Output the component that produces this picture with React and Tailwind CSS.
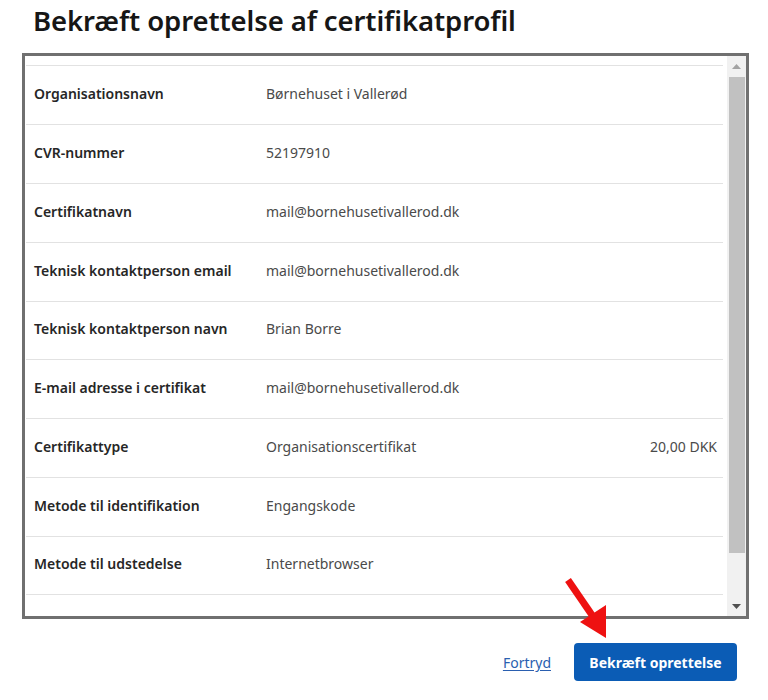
import React from "react";

const rows = [
  ["Organisationsnavn", "Børnehuset i Vallerød", "", "h-[59px]"],
  ["CVR-nummer", "52197910", "", "h-[59px]"],
  ["Certifikatnavn", "mail@bornehusetivallerod.dk", "", "h-[59px]"],
  ["Teknisk kontaktperson email", "mail@bornehusetivallerod.dk", "", "h-[59px]"],
  ["Teknisk kontaktperson navn", "Brian Borre", "", "h-[58px]"],
  ["E-mail adresse i certifikat", "mail@bornehusetivallerod.dk", "", "h-[59px]"],
  ["Certifikattype", "Organisationscertifikat", "20,00 DKK", "h-[59px]"],
  ["Metode til identifikation", "Engangskode", "", "h-[59px]"],
  ["Metode til udstedelse", "Internetbrowser", "", "h-[58px]"],
];

export default function App() {
  return (
    <div
      className="relative w-[768px] h-[700px] bg-white overflow-hidden"
      style={{ fontFamily: '"Noto Sans", "Open Sans", sans-serif' }}
    >
      <h1 className="pl-[33px] pt-[1px] h-[53px] text-[27.5px] leading-[40px] font-semibold text-[#161616] tracking-[-0.1px]">
        Bekræft oprettelse af certifikatprofil
      </h1>
      <div className="ml-[22px] w-[727px] h-[566px] border-[3px] border-[#707070] flex">
        <div className="flex-1 pr-[4px] pl-[1px] pt-[9px]">
          <div className="border-t border-[#e2e2e2]">
            {rows.map(([label, value, extra, h]) => (
              <div
                key={label}
                className={`${h} border-b border-[#e2e2e2] flex items-center pl-[8px] pr-[6px] pb-[4px] text-[14px]`}
              >
                <div className="w-[232px] font-semibold text-[#262626]">{label}</div>
                <div className="flex-1 text-[#4a4a4a]">{value}</div>
                {extra && <div className="text-[#4a4a4a]">{extra}</div>}
              </div>
            ))}
          </div>
        </div>
        <div className="w-[19px] bg-[#f1f1f1] flex flex-col items-center">
          <div className="h-[21px] flex items-center justify-center">
            <svg width="9" height="5" viewBox="0 0 9 5">
              <polygon points="0,5 9,5 4.5,0" fill="#a3a3a3" />
            </svg>
          </div>
          <div className="w-[16px] h-[476px] bg-[#c1c1c1]" />
          <div className="flex-1 flex items-end justify-center pb-[7px]">
            <svg width="9" height="5" viewBox="0 0 9 5">
              <polygon points="0,0 9,0 4.5,5" fill="#505050" />
            </svg>
          </div>
        </div>
      </div>
      <div className="flex items-center justify-end gap-[23px] pr-[31px] pt-[24px]">
        <a className="text-[14px] text-[#2a5fb0] underline underline-offset-2">Fortryd</a>
        <button className="w-[163px] h-[38px] rounded-[4px] bg-[#0b5cb5] text-white text-[14px] font-bold">
          Bekræft oprettelse
        </button>
      </div>
      <svg
        className="absolute left-[560px] top-[574px]"
        width="60"
        height="70"
        viewBox="0 0 60 70"
      >
        <line x1="8" y1="6" x2="34" y2="44" stroke="#ee1111" strokeWidth="7" strokeLinecap="butt" />
        <polygon points="20,48 46,31 46,64" fill="#ee1111" />
      </svg>
    </div>
  );
}
